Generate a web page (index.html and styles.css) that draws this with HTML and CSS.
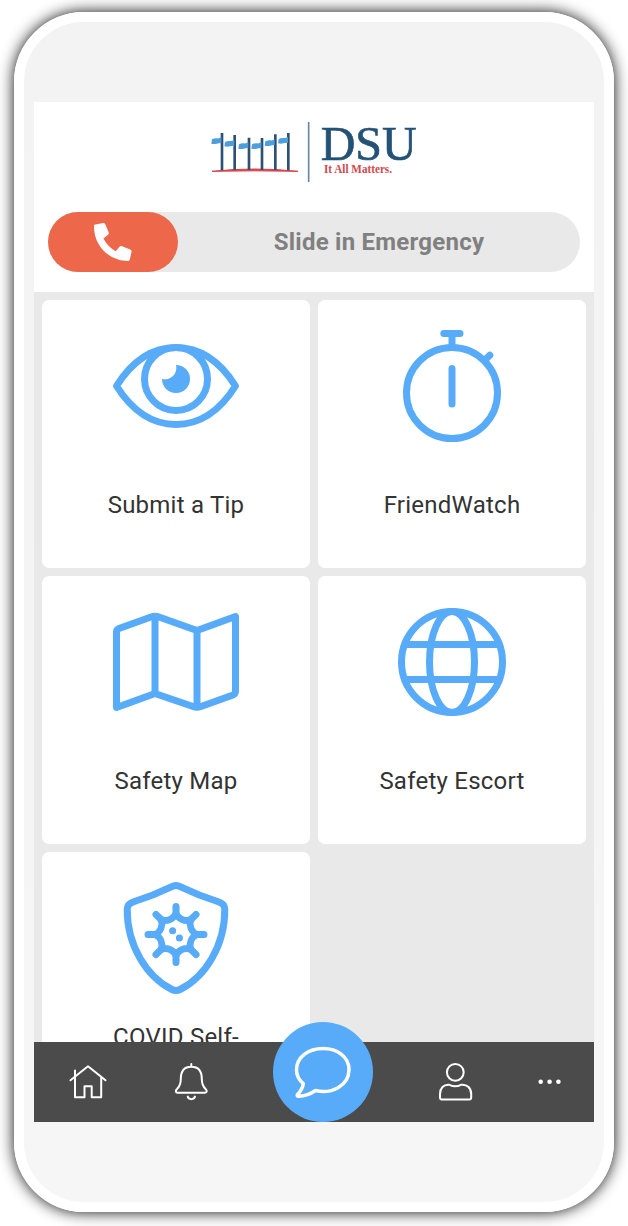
FILE: index.html
```html
<!DOCTYPE html>
<html lang="en">
<head>
<meta charset="utf-8">
<title>DSU Safety</title>
<link rel="stylesheet" href="styles.css">
</head>
<body>
<div class="phone">
  <main class="screen">
    <header class="header">
      <svg class="logo" viewBox="0 0 690 255">
        <path d="M36 184Q164 170 294 184Q164 181 36 184Z" fill="#d8434a" stroke="#d8434a" stroke-width="3"/>
        <path d="M66 69V181M104 75V180M147 83V180M186 84V180M226 73V180M265 69V181" stroke="#2d5175" stroke-width="8"/>
        <g fill="#4c9fdb">
          <path id="flag" d="M36 88Q44 84 51 85T64 82V99Q56 99 50 101T34 101Z"/>
          <use href="#flag" x="39" y="8"/>
          <use href="#flag" x="81" y="15"/>
          <use href="#flag" x="120" y="15"/>
          <use href="#flag" x="160" y="6"/>
          <use href="#flag" x="200" y="-1"/>
        </g>
        <path d="M326 36V216" stroke="#6f879e" stroke-width="5"/>
        <text class="logo-name" x="362" y="150" textLength="288" lengthAdjust="spacingAndGlyphs">DSU</text>
        <text class="logo-tag" x="372" y="190" textLength="204" lengthAdjust="spacingAndGlyphs">It All Matters.</text>
      </svg>
      <div class="slider">
        <div class="handle">
          <svg class="call" viewBox="180 69 112 113"><path fill="#fff" d="M180 79Q179 74 184 73L208 69Q212 69 214 73L224 97Q225 101 222 104L208 115Q222 141 245 153L256 140Q259 136 264 138L288 148Q293 150 292 155L287 178Q286 182 282 182C225 182 180 137 180 79Z"/></svg>
        </div>
        <span class="slider-label">Slide in Emergency</span>
      </div>
    </header>
    <section class="tiles">
      <article class="tile">
        <svg class="icon" viewBox="0 0 128 128">
          <path d="M4.5 64C19 41 39 25.5 64 25.5S109 41 123.500 64C109 87 89 102.500 64 102.500S19 87 4.500 64Z"/>
          <circle cx="64" cy="57" r="31.500"/>
          <path class="solid" d="M64 43A14 14 0 1 1 50 57A11.500 11.500 0 0 0 64 43Z"/>
        </svg>
        <h2 class="label">Submit a Tip</h2>
      </article>
      <article class="tile">
        <svg class="icon" viewBox="0 0 128 128">
          <circle cx="64" cy="71" r="45.500"/>
          <path d="M55.800 11.500H72M64 12V24M64 46.500V82M97 38L101.800 33.300"/>
        </svg>
        <h2 class="label">FriendWatch</h2>
      </article>
      <article class="tile">
        <svg class="icon" viewBox="0 0 128 128">
          <path d="M4.500 106.500V34Q4.500 31.500 7 30.500L39 19Q43 17.500 47 19L85 32.500L123.500 18.500V93Q123.500 96 121 97L89 108.500Q85 110 81 108.500L43 95.500L4.500 109.500ZM43 18.500V95.500M85 32.500V109"/>
        </svg>
        <h2 class="label">Safety Map</h2>
      </article>
      <article class="tile">
        <svg class="icon" viewBox="0 0 128 128">
          <circle cx="64" cy="64" r="50.500"/>
          <ellipse cx="64" cy="64" rx="22.500" ry="50.500"/>
          <path d="M17 46.400H111M17 81.400H111"/>
        </svg>
        <h2 class="label">Safety Escort</h2>
      </article>
      <article class="tile">
        <svg class="icon" viewBox="0 0 128 128">
          <path d="M61 12.200Q64 11 67 12.200C80 18.500 94 24 107 28Q112.500 30 112.800 35C113 72 93 103 68 115.500Q64 117.500 60 115.500C35 103 15 72 15.200 35Q15.500 30 21 28C34 24 48 18.500 61 12.200Z"/>
          <g transform="translate(64 60.500)">
            <path d="M0-20.500A13 13 0 0 0 14.500-14.500A13 13 0 0 0 20.500 0A13 13 0 0 0 14.500 14.500A13 13 0 0 0 0 20.500A13 13 0 0 0-14.500 14.500A13 13 0 0 0-20.500 0A13 13 0 0 0-14.500-14.500A13 13 0 0 0 0-20.500Z"/>
            <path d="M0-21V-28M0 21V28M-21 0H-28M21 0H28M14.500-14.500L20-20M14.500 14.500L20 20M-14.500 14.500L-20 20M-14.500-14.500L-20-20"/>
            <circle class="solid" cx="-3.400" cy="-3.700" r="3.500"/>
            <circle class="solid" cx="3.400" cy="3.500" r="3.500"/>
          </g>
        </svg>
        <h2 class="label label-wrapped">COVID Self-</h2>
      </article>
    </section>
    <nav class="nav">
      <svg class="nav-icon" viewBox="0 0 44 44"><path d="M4.500 20.300L22 6.300L39.500 20.300M9 10.500V37.300H18.500V26.300H25.700V37.300H35.200V17"/></svg>
      <svg class="nav-icon" viewBox="0 0 44 44"><path d="M22.300 4V6.500M8.500 32.700C6.500 32.700 6.300 30.500 8 29C11.200 26 11.800 24 11.800 19C11.800 10.500 15.500 6.800 22.300 6.800S32.800 10.500 32.800 19C32.800 24 33.400 26 36.600 29C38.300 30.500 38 32.700 36 32.700ZM18.700 36.600C19.500 40 25.200 40 26 36.600"/></svg>
      <span class="chat">
        <svg viewBox="0 0 100 100"><path d="M42.500 68.500C58 72.500 76 64 76 47.500C76 35 64.500 26.500 50 26.500S23.500 35 23.500 48C23.500 54 26 58 30.300 61.500C29.800 66 27 70 24.200 73C24 74.200 25 74.300 26 74.200C32 74 37.500 72 42.500 68.500Z"/></svg>
      </span>
      <svg class="nav-icon" viewBox="0 0 44 44"><circle cx="22.300" cy="12.300" r="8.400"/><path d="M16.500 24.800Q22.300 27.600 28 24.800C34.500 24 38.200 28.500 38.200 34V37.500Q38.200 39.500 36.200 39.500H9Q7 39.500 7 37.500V34C7 28.500 10.500 24 16.500 24.800Z"/></svg>
      <svg class="nav-icon" viewBox="0 0 44 44"><g class="dots"><circle cx="13.700" cy="21.700" r="2.300"/><circle cx="22.600" cy="21.700" r="2.300"/><circle cx="31.400" cy="21.700" r="2.300"/></g></svg>
    </nav>
  </main>
</div>
</body>
</html>
```
FILE: styles.css
```css
* { box-sizing: border-box; }
body {
  margin: 0;
  padding: 12px 14px;
  height: 1226px;
  overflow: hidden;
  background: #fff;
  font-family: Roboto, sans-serif;
}
.phone {
  width: 600px;
  height: 1200px;
  padding: 80px 10px;
  border: 10px solid #fff;
  border-radius: 70px;
  background: linear-gradient(#f3f3f3, #f7f6f7);
  box-shadow: 0 0 15px rgba(0, 0, 0, .95);
}
.screen {
  display: flex;
  flex-direction: column;
  width: 560px;
  height: 1020px;
  background: #e9e9e9;
}
.header {
  flex: none;
  height: 190px;
  padding: 8px 14px 20px;
  background: #fff;
}
.logo {
  display: block;
  width: 230px;
  height: 85px;
  margin: 0 0 17px 152px;
}
.logo-name { font: 146px "Liberation Serif", serif; fill: #245277; stroke: #245277; stroke-width: 2px; }
.logo-tag { font: bold 38px "Liberation Serif", serif; fill: #d2484d; }
.slider {
  display: flex;
  height: 60px;
  border-radius: 30px;
  background: #e9e9e9;
}
.handle {
  width: 130px;
  padding: 11px 0 0 46px;
  border-radius: 30px;
  background: #ed684a;
}
.call { display: block; width: 37.500px; height: 38px; }
.slider-label {
  flex: 1;
  text-align: center;
  font-size: 24px;
  font-weight: bold;
  line-height: 60px;
  letter-spacing: .24px;
  color: #808080;
}
.tiles {
  flex: 1;
  min-height: 0;
  display: grid;
  grid-template-columns: 268px 268px;
  grid-auto-rows: 268px;
  gap: 8px;
  padding: 8px;
  overflow: hidden;
}
.tile {
  display: flex;
  flex-direction: column;
  align-items: center;
  padding-top: 22px;
  border-radius: 7px;
  background: #fff;
}
.icon {
  width: 128px;
  height: 128px;
  fill: none;
  stroke: #58abf9;
  stroke-width: 7;
  stroke-linecap: round;
  stroke-linejoin: round;
}
.solid { fill: #58abf9; stroke: none; }
.label {
  margin: 40px 0 0;
  font-size: 24px;
  font-weight: normal;
  line-height: 30px;
  letter-spacing: .24px;
  color: #333;
}
.label-wrapped { margin-top: 20px; }
.nav {
  flex: none;
  display: grid;
  grid-template-columns: 108px 98px 166px 98px 90px;
  align-items: center;
  justify-items: center;
  height: 80px;
  background: #4b4b4b;
}
.nav-icon {
  width: 44px;
  height: 44px;
  fill: none;
  stroke: #fff;
  stroke-width: 2;
  stroke-linecap: round;
  stroke-linejoin: round;
}
.dots { fill: #fff; stroke: none; }
.chat {
  width: 100px;
  height: 100px;
  margin-top: -20px;
  border-radius: 50%;
  background: #58abf9;
}
.chat svg { display: block; fill: none; stroke: #fff; stroke-width: 3.500; stroke-linejoin: round; }
```
